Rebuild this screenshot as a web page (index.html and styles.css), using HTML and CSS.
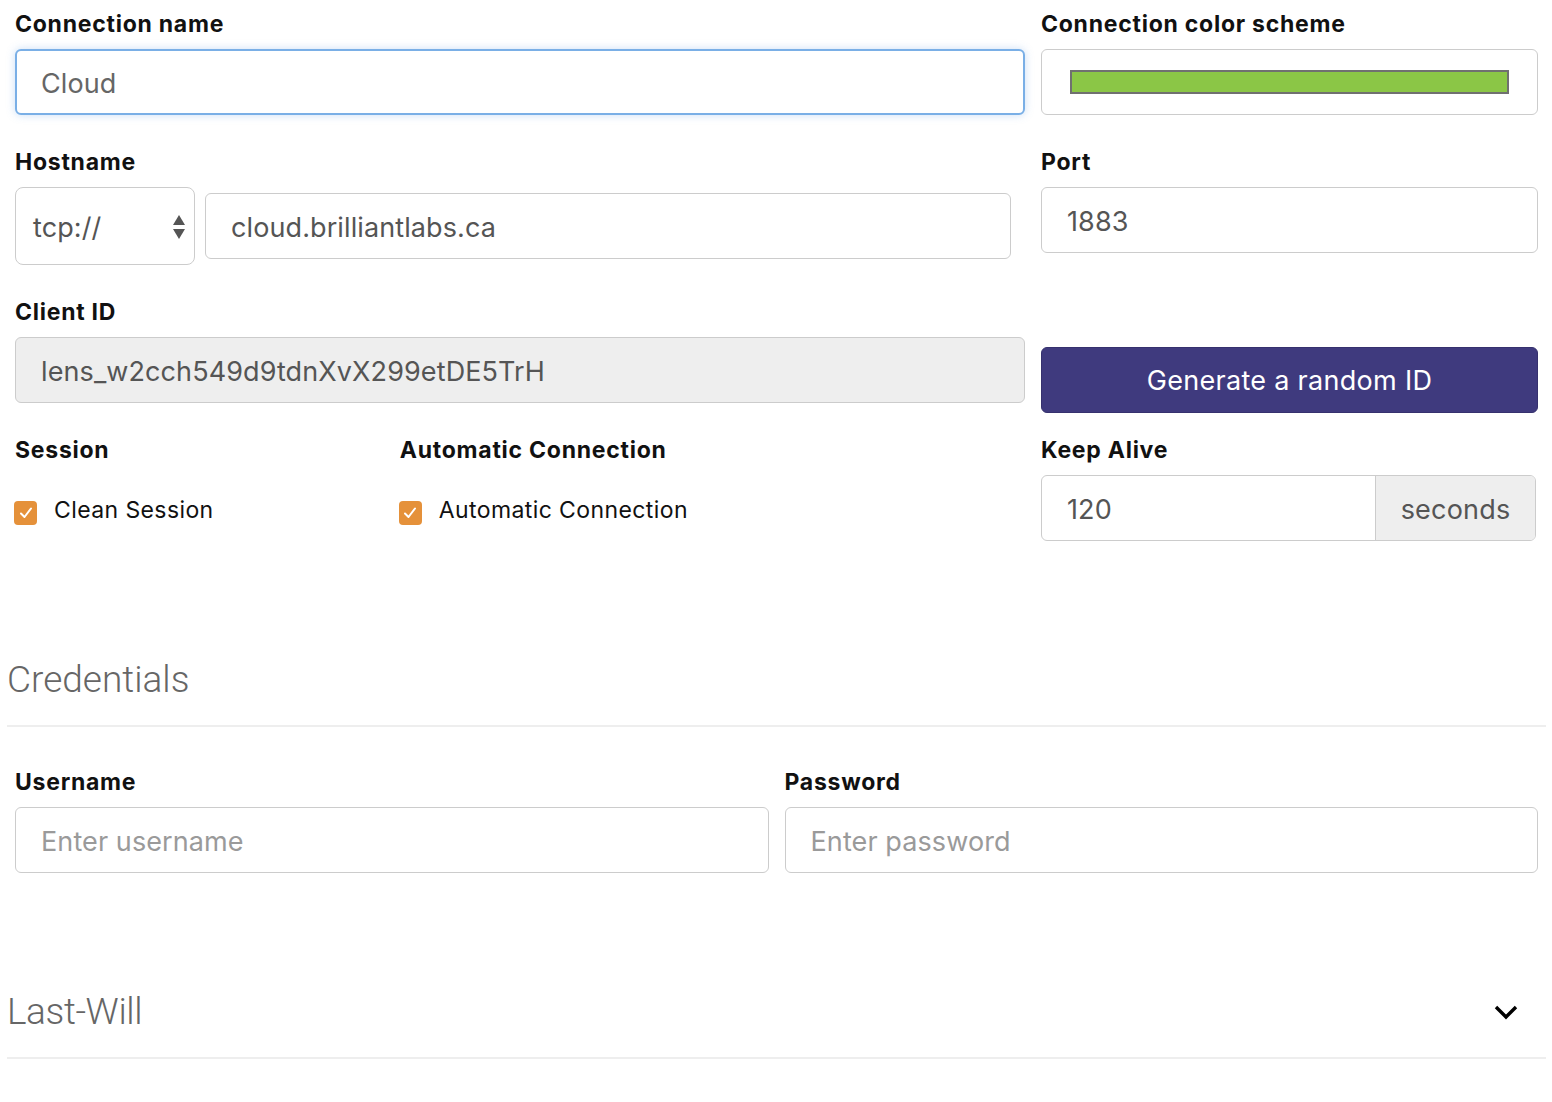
FILE: index.html
```html
<!DOCTYPE html>
<html lang="en">
<head>
<meta charset="utf-8">
<title>Connection settings</title>
<link rel="stylesheet" href="styles.css">
</head>
<body>
<div class="page">
  <div class="row row-a">
    <div class="col span-8">
      <label class="lbl">Connection name</label>
      <div class="field focus"><span class="val light">Cloud</span></div>
    </div>
    <div class="col span-4">
      <label class="lbl">Connection color scheme</label>
      <div class="field color-field"><div class="swatch"></div></div>
    </div>
  </div>

  <div class="row row-a">
    <div class="col span-8">
      <label class="lbl">Hostname</label>
      <div class="host-group">
        <div class="select">
          <span class="val">tcp://</span>
          <svg class="arrows" width="14" height="26" viewBox="0 0 14 26"><path d="M7 1 L13 11 L1 11 Z" fill="#555"/><path d="M1 15 L13 15 L7 25 Z" fill="#555"/></svg>
        </div>
        <div class="field host"><span class="val">cloud.brilliantlabs.ca</span></div>
      </div>
    </div>
    <div class="col span-4">
      <label class="lbl">Port</label>
      <div class="field"><span class="val">1883</span></div>
    </div>
  </div>

  <div class="row row-a">
    <div class="col span-8">
      <label class="lbl">Client ID</label>
      <div class="field disabled"><span class="val">lens_w2cch549d9tdnXvX299etDE5TrH</span></div>
    </div>
    <div class="col span-4">
      <div class="lbl-spacer"></div>
      <button class="btn">Generate a random ID</button>
    </div>
  </div>

  <div class="row">
    <div class="col span-3">
      <label class="lbl">Session</label>
      <div class="check-row"><span class="checkbox"><svg width="14" height="12" viewBox="0 0 14 12"><path d="M2 6.5 L5.5 10 L12 1.5" fill="none" stroke="#fff" stroke-width="2" stroke-linecap="round" stroke-linejoin="round"/></svg></span><span class="check-text">Clean Session</span></div>
    </div>
    <div class="col span-5">
      <label class="lbl">Automatic Connection</label>
      <div class="check-row"><span class="checkbox"><svg width="14" height="12" viewBox="0 0 14 12"><path d="M2 6.5 L5.5 10 L12 1.5" fill="none" stroke="#fff" stroke-width="2" stroke-linecap="round" stroke-linejoin="round"/></svg></span><span class="check-text">Automatic Connection</span></div>
    </div>
    <div class="col span-4">
      <label class="lbl">Keep Alive</label>
      <div class="input-group">
        <div class="ig-input"><span class="val">120</span></div>
        <div class="ig-addon">seconds</div>
      </div>
    </div>
  </div>

  <h2 class="section">Credentials</h2>

  <div class="row row-cred">
    <div class="col span-6">
      <label class="lbl">Username</label>
      <div class="field"><span class="val placeholder">Enter username</span></div>
    </div>
    <div class="col span-6">
      <label class="lbl">Password</label>
      <div class="field"><span class="val placeholder">Enter password</span></div>
    </div>
  </div>

  <h2 class="section section-toggle"><span class="tight">Last-Will</span>
    <svg class="chevron" width="24" height="16" viewBox="0 0 24 16"><path d="M2 3 L12 13 L22 3" fill="none" stroke="#000" stroke-width="3.4"/></svg>
  </h2>
</div>
</body>
</html>
```

FILE: styles.css
```css
* { box-sizing: border-box; }
html, body { margin: 0; padding: 0; background: #fff; }
body {
  font-family: Inter, "Noto Sans", "DejaVu Sans", sans-serif;
  color: #111;
}
.page {
  width: 1552px;
  padding: 10px 6px 0 7px;
}
.row {
  display: grid;
  grid-template-columns: repeat(12, 1fr);
}
.row-a { margin-bottom: 33px; }
.col { padding: 0 8px; min-width: 0; }
.span-3 { grid-column: span 3; }
.span-4 { grid-column: span 4; }
.span-5 { grid-column: span 5; }
.span-6 { grid-column: span 6; }
.span-8 { grid-column: span 8; }

.lbl {
  display: block;
  font-size: 23px;
  font-weight: 700;
  line-height: 28px;
  letter-spacing: 0.75px;
  margin-bottom: 11px;
  color: #111;
}
.lbl-spacer { height: 39px; }

.field {
  height: 66px;
  border: 1px solid #ccc;
  border-radius: 6px;
  display: flex;
  align-items: center;
  padding: 3px 25px 0;
  background: #fff;
}
.field.focus {
  border: 2px solid #7aafe6;
  padding-left: 24px;
  box-shadow: 0 0 9px rgba(102, 160, 230, 0.35);
}
.field.disabled { background: #eee; }
.val {
  font-size: 27px;
  color: #555;
  white-space: nowrap;
  letter-spacing: 0.1px;
}
.val.light { color: #666; }
.val.placeholder { color: #9a9a9a; }

.color-field { padding: 0 28px; }
.swatch {
  width: 100%;
  height: 24px;
  border: 2px solid #707070;
  background: #8bc646;
}

.host-group {
  display: flex;
  align-items: center;
  height: 78px;
  gap: 10px;
  padding-right: 14px;
}
.select {
  width: 180px;
  height: 78px;
  border: 1px solid #ccc;
  border-radius: 8px;
  display: flex;
  align-items: center;
  justify-content: space-between;
  padding: 2px 8px 0 17px;
}
.select .arrows { margin-top: -1px; }
.host { flex: 1; }

.btn {
  display: block;
  width: 100%;
  height: 66px;
  margin: 10px 0 -10px;
  border: 1px solid #36316e;
  border-radius: 6px;
  background: #3f3a7e;
  color: #fff;
  font-family: Inter, "Noto Sans", sans-serif;
  font-size: 27px;
  letter-spacing: 0.3px;
  font-weight: 400;
  padding-top: 2px;
  cursor: pointer;
}

.check-row {
  height: 66px;
  display: flex;
  align-items: center;
  padding-top: 4px;
  gap: 17px;
}
.checkbox {
  width: 23px;
  height: 24px;
  border-radius: 4px;
  background: #e5913a;
  display: flex;
  align-items: center;
  justify-content: center;
  margin-left: -1px;
  margin-top: 5px;
}
.check-text {
  font-size: 23px;
  letter-spacing: 0.4px;
  color: #111;
}

.input-group {
  display: flex;
  height: 66px;
  border: 1px solid #ccc;
  border-radius: 6px;
  overflow: hidden;
  margin-right: 2px;
}
.ig-input {
  flex: 1;
  display: flex;
  align-items: center;
  padding: 3px 25px 0;
}
.ig-addon {
  width: 160px;
  background: #eee;
  border-left: 1px solid #ccc;
  display: flex;
  align-items: center;
  justify-content: center;
  padding-top: 2px;
  font-size: 27px;
  letter-spacing: 0.2px;
  color: #555;
}

.section {
  margin: 117px 0 0;
  padding: 0 0 23px;
  font-family: Roboto, "Liberation Sans", sans-serif;
  font-weight: 300;
  font-size: 37px;
  line-height: 44px;
  color: #666;
  border-bottom: 2px solid #eee;
}
.section .tight { letter-spacing: -0.4px; }
.section-toggle {
  display: flex;
  justify-content: space-between;
  align-items: center;
}
.chevron { margin-right: 28px; }
.row-cred { margin-top: 41px; }
```
